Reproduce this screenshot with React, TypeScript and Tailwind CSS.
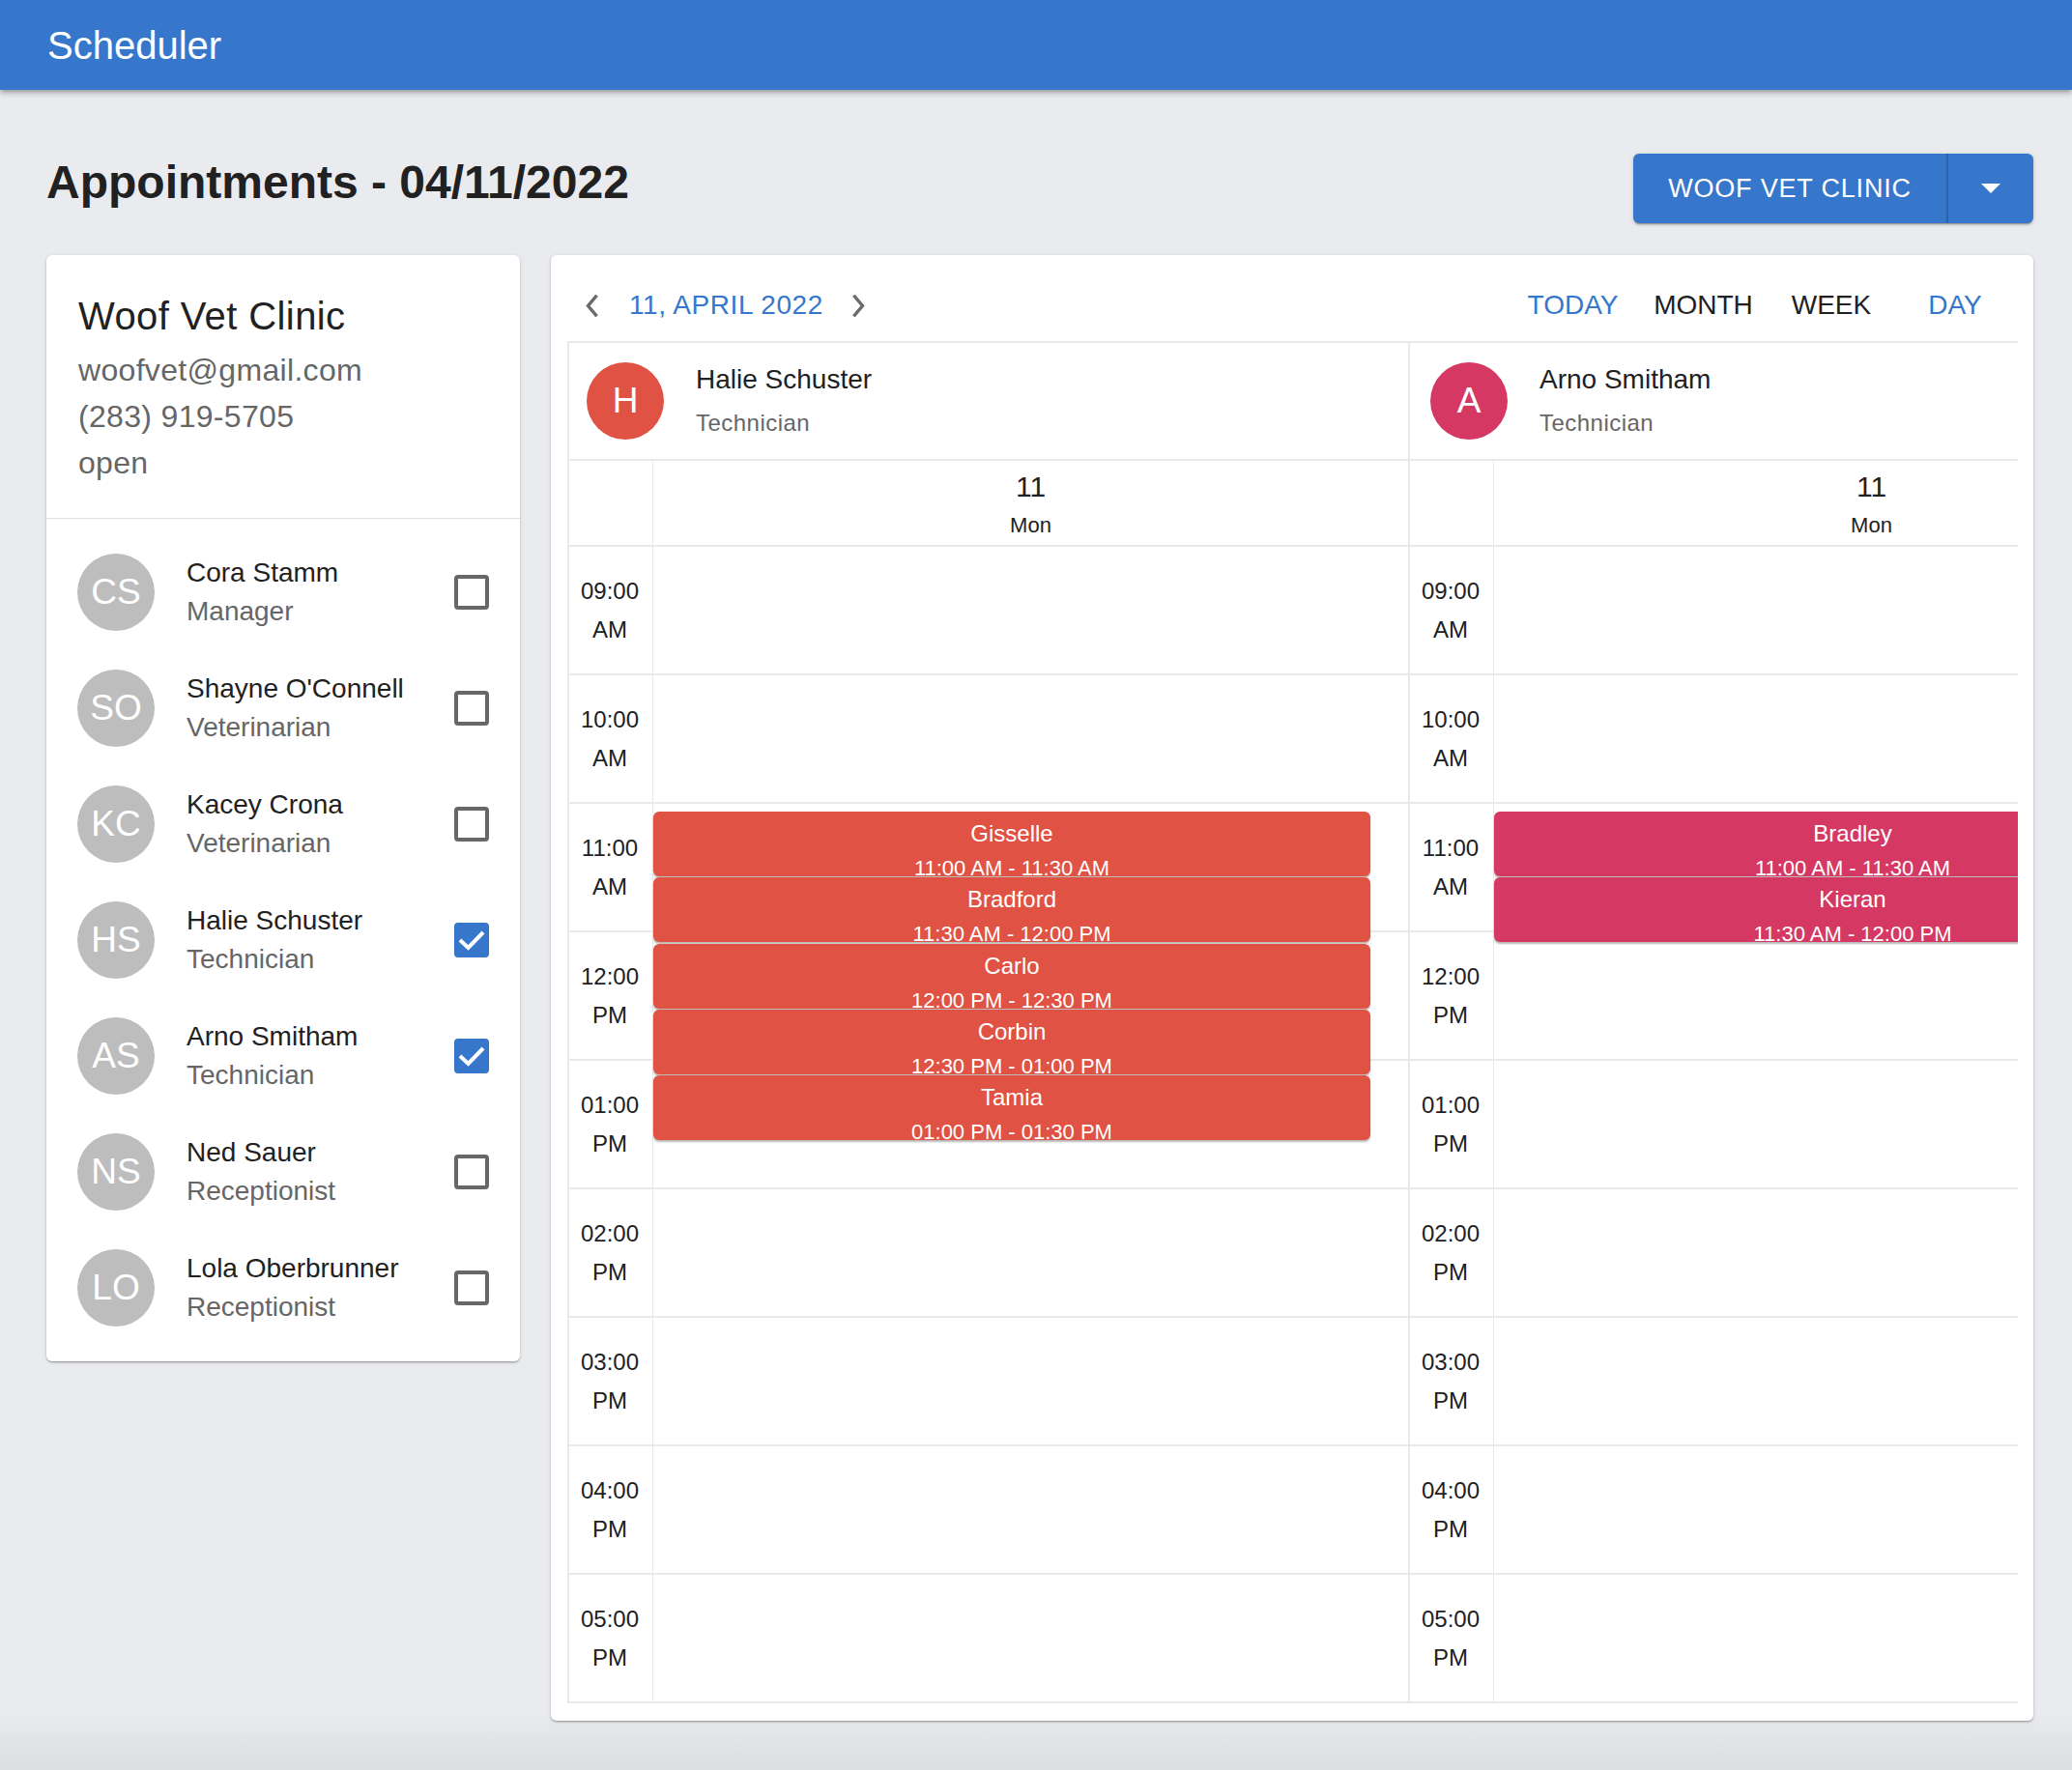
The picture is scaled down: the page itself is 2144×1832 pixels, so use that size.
import React from 'react';

type Appt = { name: string; time: string; slot: number };

const staff = [
  { initials: 'CS', name: 'Cora Stamm', role: 'Manager', checked: false },
  { initials: 'SO', name: "Shayne O'Connell", role: 'Veterinarian', checked: false },
  { initials: 'KC', name: 'Kacey Crona', role: 'Veterinarian', checked: false },
  { initials: 'HS', name: 'Halie Schuster', role: 'Technician', checked: true },
  { initials: 'AS', name: 'Arno Smitham', role: 'Technician', checked: true },
  { initials: 'NS', name: 'Ned Sauer', role: 'Receptionist', checked: false },
  { initials: 'LO', name: 'Lola Oberbrunner', role: 'Receptionist', checked: false },
];

const hours = [
  ['09:00', 'AM'],
  ['10:00', 'AM'],
  ['11:00', 'AM'],
  ['12:00', 'PM'],
  ['01:00', 'PM'],
  ['02:00', 'PM'],
  ['03:00', 'PM'],
  ['04:00', 'PM'],
  ['05:00', 'PM'],
];

const halieAppts: Appt[] = [
  { name: 'Gisselle', time: '11:00 AM - 11:30 AM', slot: 0 },
  { name: 'Bradford', time: '11:30 AM - 12:00 PM', slot: 1 },
  { name: 'Carlo', time: '12:00 PM - 12:30 PM', slot: 2 },
  { name: 'Corbin', time: '12:30 PM - 01:00 PM', slot: 3 },
  { name: 'Tamia', time: '01:00 PM - 01:30 PM', slot: 4 },
];

const arnoAppts: Appt[] = [
  { name: 'Bradley', time: '11:00 AM - 11:30 AM', slot: 0 },
  { name: 'Kieran', time: '11:30 AM - 12:00 PM', slot: 1 },
];

function Chevron({ dir }: { dir: 'left' | 'right' }) {
  return (
    <svg width="13" height="23" viewBox="0 0 13 23" fill="none">
      <path
        d={dir === 'left' ? 'M10.5 2 L2.5 11.5 L10.5 21' : 'M2.5 2 L10.5 11.5 L2.5 21'}
        stroke="#6b6b6b"
        strokeWidth="3.4"
        strokeLinecap="square"
      />
    </svg>
  );
}

function Checkbox({ checked }: { checked: boolean }) {
  if (checked) {
    return (
      <div className="w-[36px] h-[36px] rounded-[4px] bg-[#3677cb] flex items-center justify-center">
        <svg width="36" height="36" viewBox="0 0 36 36" fill="none">
          <path d="M6 18 L14.5 26 L30 10" stroke="white" strokeWidth="4" />
        </svg>
      </div>
    );
  }
  return <div className="w-[36px] h-[36px] rounded-[4px] border-[4px] border-[#666666]" />;
}

function ResourceColumn({
  initial,
  name,
  color,
  appts,
  pad,
}: {
  initial: string;
  name: string;
  color: string;
  appts: Appt[];
  pad: string;
}) {
  return (
    <div className="w-[870px] shrink-0 border-r-2 border-[#e9e9e9]">
      {/* resource header */}
      <div className={`h-[122px] border-b-2 border-[#e9e9e9] flex items-center ${pad}`}>
        <div
          className={`w-[80px] h-[80px] rounded-full flex items-center justify-center text-white text-[37px] ${color}`}
        >
          {initial}
        </div>
        <div className="ml-[33px]">
          <div className="text-[28px] leading-[36px] text-[#212121]">{name}</div>
          <div className="mt-[9px] text-[24px] leading-[36px] text-[#666666] tracking-[0.02em]">Technician</div>
        </div>
      </div>

      {/* date header */}
      <div className="h-[89px] border-b-2 border-[#e9e9e9] flex">
        <div className="w-[87px] shrink-0 border-r border-[#e9e9e9]" />
        <div className="flex-1 text-center text-[#212121] pt-[9px]">
          <div className="text-[30px] leading-[36px]">11</div>
          <div className="mt-[7px] text-[22px] leading-[30px]">Mon</div>
        </div>
      </div>

      {/* body */}
      <div className="flex">
        <div className="w-[87px] shrink-0 border-r border-[#e9e9e9]">
          {hours.map(([t, p]) => (
            <div
              key={t}
              className="h-[133px] border-b-2 border-[#e9e9e9] flex flex-col items-center justify-center pr-[2px] text-[24px] leading-[40px] text-[#212121]"
            >
              <div>{t}</div>
              <div>{p}</div>
            </div>
          ))}
        </div>
        <div className="flex-1 relative">
          {hours.map(([t]) => (
            <div key={t} className="h-[133px] border-b-2 border-[#e9e9e9]" />
          ))}
          {appts.map((a) => (
            <div
              key={a.name}
              className={`absolute left-0 right-[39px] h-[67px] rounded-[6px] overflow-hidden text-white text-center pt-[5px] shadow-[0_2px_2px_rgba(0,0,0,0.28)] ${color}`}
              style={{ top: 274 + a.slot * 68.25 }}
            >
              <div className="text-[24px] leading-[36px]">{a.name}</div>
              <div className="text-[22px] leading-[36px]">{a.time}</div>
            </div>
          ))}
        </div>
      </div>
    </div>
  );
}

export default function App() {
  return (
    <div className="min-h-screen bg-[linear-gradient(to_bottom,#eaebef_0,#eaebef_1770px,#dcdde1_1832px)] font-['Liberation_Sans',Arial,sans-serif]">
      {/* App bar */}
      <header className="h-[93px] bg-[#3677cb] flex items-center px-[49px] shadow-[0_2px_4px_-1px_rgba(0,0,0,0.2),0_4px_5px_0_rgba(0,0,0,0.14),0_1px_10px_0_rgba(0,0,0,0.12)] relative z-10">
        <span className="text-white text-[40px]">Scheduler</span>
      </header>

      <main className="pl-[48px] pr-[40px] pb-[50px]">
        {/* Title row */}
        <div className="pt-[66px] flex justify-between items-start">
          <h1 className="text-[48px] leading-[60px] font-bold text-[#212121]">Appointments - 04/11/2022</h1>
          <div className="h-[72px] flex rounded-[6px] bg-[#3677cb] text-white shadow-[0_3px_1px_-2px_rgba(0,0,0,0.2),0_2px_2px_0_rgba(0,0,0,0.14),0_1px_5px_0_rgba(0,0,0,0.12)]">
            <div className="w-[326px] flex items-center justify-center border-r-2 border-[#2b62ad] text-[27px] tracking-[0.03em]">
              WOOF VET CLINIC
            </div>
            <div className="w-[88px] flex items-center justify-center">
              <svg width="20" height="10" viewBox="0 0 20 10">
                <path d="M0 0 L20 0 L10 10 Z" fill="white" />
              </svg>
            </div>
          </div>
        </div>

        {/* Cards */}
        <div className="mt-[33px] flex items-start gap-[32px]">
          {/* Clinic card */}
          <div className="w-[490px] shrink-0 bg-white rounded-[6px] shadow-[0_2px_2px_-1px_rgba(0,0,0,0.2),0_1px_2px_0_rgba(0,0,0,0.14),0_1px_4px_0_rgba(0,0,0,0.12)]">
            <div className="px-[33px] pt-[39px] pb-[33px] border-b border-[#e0e0e0]">
              <div className="text-[40px] leading-[48px] tracking-[0.01em] text-[#212121]">Woof Vet Clinic</div>
              <div className="mt-[8px] text-[32px] leading-[48px] tracking-[0.01em] text-[#666666]">woofvet@gmail.com</div>
              <div className="text-[32px] leading-[48px] tracking-[0.01em] text-[#666666]">(283) 919-5705</div>
              <div className="text-[32px] leading-[48px] tracking-[0.01em] text-[#666666]">open</div>
            </div>
            <ul className="py-[16px]">
              {staff.map((s) => (
                <li key={s.name} className="h-[120px] flex items-center pl-[32px] pr-[32px]">
                  <div className="w-[80px] h-[80px] rounded-full bg-[#bdbdbd] flex items-center justify-center text-white text-[37px]">
                    {s.initials}
                  </div>
                  <div className="ml-[33px] flex-1">
                    <div className="text-[28px] leading-[40px] text-[#212121]">{s.name}</div>
                    <div className="text-[28px] leading-[40px] text-[#666666]">{s.role}</div>
                  </div>
                  <Checkbox checked={s.checked} />
                </li>
              ))}
            </ul>
          </div>

          {/* Scheduler card */}
          <div className="flex-1 min-w-0 bg-white rounded-[6px] pl-[17px] pr-[16px] pb-[18px] shadow-[0_2px_2px_-1px_rgba(0,0,0,0.2),0_1px_2px_0_rgba(0,0,0,0.14),0_1px_4px_0_rgba(0,0,0,0.12)]">
            {/* toolbar */}
            <div className="pt-[15px] h-[89px] flex items-center">
              <div className="ml-[19px] flex items-center">
                <Chevron dir="left" />
              </div>
              <span className="ml-[32px] text-[28px] tracking-[0.02em] text-[#3677cb]">11, APRIL 2022</span>
              <div className="ml-[30px] flex items-center">
                <Chevron dir="right" />
              </div>
              <div className="ml-auto mr-[-1px] flex items-center text-[28px]">
                <span className="w-[129px] text-center text-[#3677cb]">TODAY</span>
                <span className="w-[141px] text-center text-[#212121]">MONTH</span>
                <span className="w-[124px] text-center text-[#212121]">WEEK</span>
                <span className="w-[132px] text-center text-[#3677cb]">DAY</span>
              </div>
            </div>

            {/* grid */}
            <div className="overflow-hidden border-t-2 border-l-2 border-[#e9e9e9] flex">
              <ResourceColumn initial="H" name="Halie Schuster" color="bg-[#e05243]" appts={halieAppts} pad="pl-[18px]" />
              <ResourceColumn initial="A" name="Arno Smitham" color="bg-[#d63864]" appts={arnoAppts} pad="pl-[21px]" />
            </div>
          </div>
        </div>
      </main>
    </div>
  );
}
